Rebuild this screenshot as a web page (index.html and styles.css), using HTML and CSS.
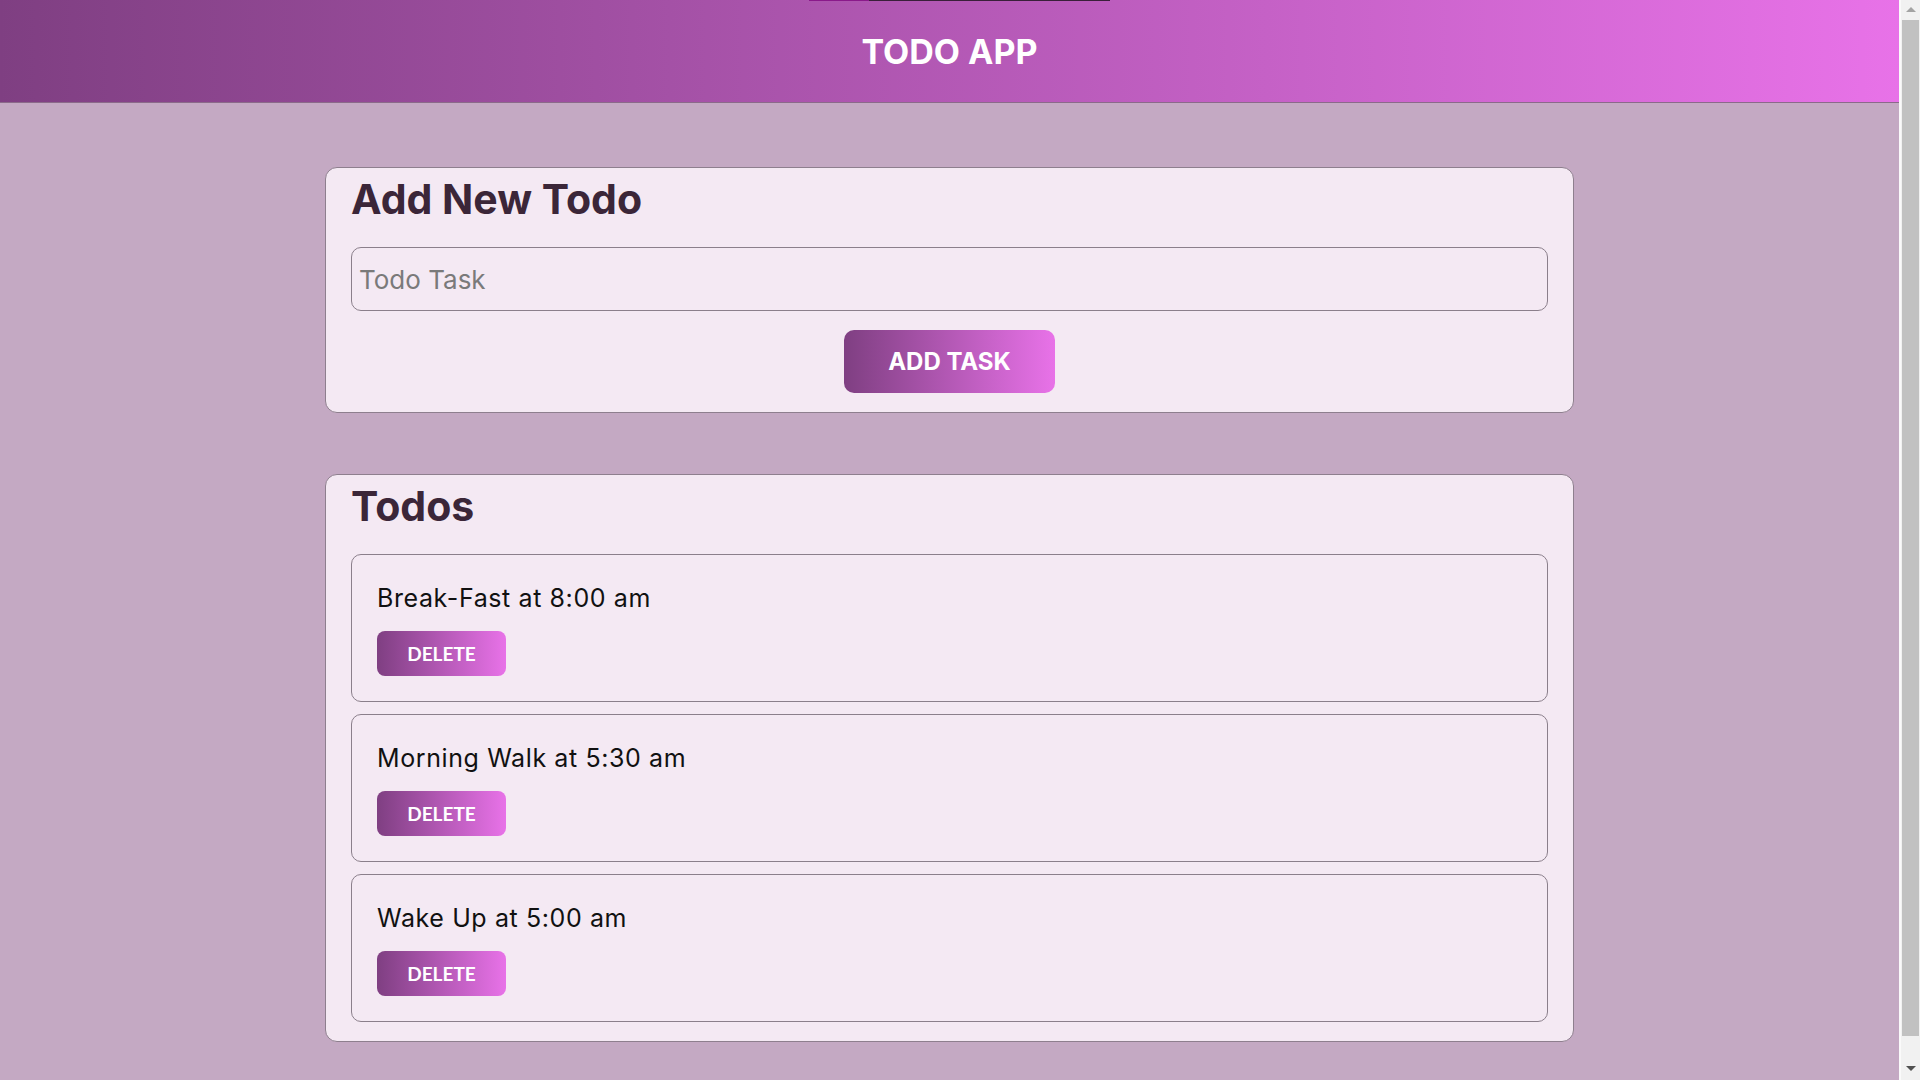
FILE: index.html
```html
<!DOCTYPE html>
<html lang="en">
<head>
<meta charset="utf-8">
<title>Todo App</title>
<link rel="stylesheet" href="styles.css">
</head>
<body>
<div class="page">
  <header class="topbar">
    <div class="progress"><span class="progress-fill"></span></div>
    <h1 class="app-title">TODO APP</h1>
  </header>
  <main class="main">
    <section class="card">
      <h2 class="card-title">Add New Todo</h2>
      <input class="task-input" type="text" placeholder="Todo Task">
      <div class="actions">
        <button class="btn-add">ADD TASK</button>
      </div>
    </section>
    <section class="card">
      <h2 class="card-title">Todos</h2>
      <ul class="todo-list">
        <li class="todo-item">
          <p class="todo-text">Break-Fast at 8:00 am</p>
          <button class="btn-delete">DELETE</button>
        </li>
        <li class="todo-item">
          <p class="todo-text">Morning Walk at 5:30 am</p>
          <button class="btn-delete">DELETE</button>
        </li>
        <li class="todo-item">
          <p class="todo-text">Wake Up at 5:00 am</p>
          <button class="btn-delete">DELETE</button>
        </li>
      </ul>
    </section>
  </main>
</div>
<div class="fake-scrollbar" aria-hidden="true">
  <span class="sb-arrow sb-up"></span>
  <span class="sb-thumb"></span>
  <span class="sb-arrow sb-down"></span>
</div>
</body>
</html>
```
FILE: styles.css
```css
* { box-sizing: border-box; }
html, body {
  margin: 0;
  padding: 0;
}
body {
  background: #c4a9c3;
  font-family: Inter, "Noto Sans", sans-serif;
  color: #111;
}
.page {
  margin-right: 21px;
}
.topbar {
  position: relative;
  height: 103px;
  background: linear-gradient(to right, #7f3f82, #e872e8);
  border-bottom: 1px solid #8b6a8a;
  display: flex;
  align-items: center;
  justify-content: center;
}
.progress {
  position: absolute;
  top: 0;
  left: 809px;
  width: 301px;
  height: 1px;
  background: #3a1f3a;
}
.progress-fill {
  display: block;
  width: 60px;
  height: 1px;
  background: #8a1a8a;
}
.app-title {
  margin: 0;
  color: #fff;
  font-size: 34px;
  font-weight: 700;
}
.main {
  padding: 64px 0 68px;
  display: flex;
  flex-direction: column;
  align-items: center;
  gap: 61px;
}
.card {
  width: 1249px;
  background: #f4e9f3;
  border: 1px solid #8e7f8e;
  border-radius: 12px;
  padding: 0 25px 19px;
}
.card-title {
  margin: 6px 0 23px;
  font-size: 41px;
  line-height: 50px;
  font-weight: 700;
  color: #3b2638;
}
.task-input {
  display: block;
  width: 100%;
  height: 64px;
  border: 1px solid #8b7f8b;
  border-radius: 10px;
  background: transparent;
  padding: 0 7px;
  font-family: Inter, "Noto Sans", sans-serif;
  font-size: 26px;
  color: #222;
  outline: none;
}
.task-input::placeholder { color: #7a7a7a; }
.actions {
  display: flex;
  justify-content: center;
  margin-top: 19px;
}
.btn-add {
  width: 211px;
  height: 63px;
  border: none;
  border-radius: 10px;
  background: linear-gradient(to right, #7f3f82, #e872e8);
  color: #fff;
  font-family: Inter, "Noto Sans", sans-serif;
  font-size: 24px;
  font-weight: 700;
}
.todo-list {
  list-style: none;
  margin: 0;
  padding: 0;
  display: flex;
  flex-direction: column;
  gap: 12px;
}
.todo-item {
  border: 1px solid #8b7f8b;
  border-radius: 10px;
  padding: 25px;
}
.todo-text {
  margin: 0 0 15px;
  font-size: 25px;
  letter-spacing: 0.6px;
  line-height: 36px;
  color: #111;
}
.btn-delete {
  width: 129px;
  height: 45px;
  border: none;
  border-radius: 8px;
  background: linear-gradient(to right, #7f3f82, #e872e8);
  color: #fff;
  font-family: Lato, sans-serif;
  font-size: 19px;
  font-weight: 700;
}
.fake-scrollbar {
  position: fixed;
  top: 0;
  right: 0;
  bottom: 0;
  width: 21px;
  background: #f1f1f1;
  border-left: 2px solid #fafafa;
  display: flex;
  flex-direction: column;
  align-items: center;
}
.sb-arrow {
  width: 0;
  height: 0;
  border-left: 5px solid transparent;
  border-right: 5px solid transparent;
}
.sb-up {
  margin-top: 7px;
  border-bottom: 5px solid #a3a3a3;
}
.sb-thumb {
  margin-top: 8px;
  width: 17px;
  height: 1016px;
  background: #c1c1c1;
}
.sb-down {
  margin-top: auto;
  margin-bottom: 9px;
  border-top: 5px solid #505050;
}
```
